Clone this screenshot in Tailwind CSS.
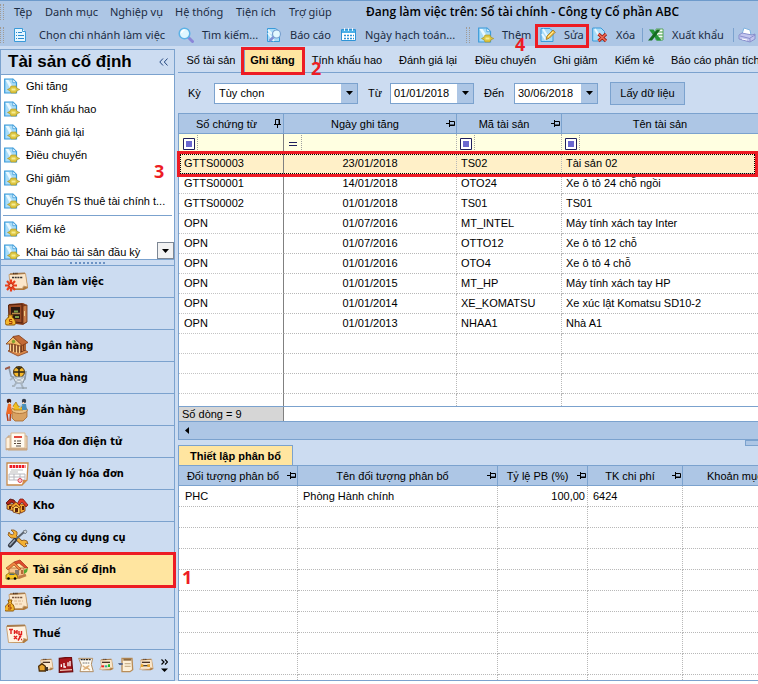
<!DOCTYPE html>
<html lang="vi">
<head>
    <meta charset="UTF-8">
    <meta name="viewport" content="width=device-width, initial-scale=1.0">
    <title>Tài sản cố định</title>
    <script src="https://cdn.jsdelivr.net/npm/@tailwindcss/browser@4"></script>
</head>
<body class="bg-white">
    <!-- Shared icons -->
    <svg class="absolute size-0">
        <symbol id="i-doc" viewBox="0 0 16 16">
            <path d="M.7 1h8.300l3.500 3.500V15H.7z" fill="#a9dcf8" stroke="#3a9ad9" stroke-width="1.200"/>
            <path d="M1.500 2h3l5 8H6z" fill="#e9f8ff"/>
            <path d="M8.800 1v3.700h3.700z" fill="#fff" stroke="#3a9ad9" stroke-width=".8"/>
            <path d="M3.500 11.500L6 10.300l1-2.300h5l1 2.300 2.800 1.200-2.800 1.300-1 2.200H7l-1-2.200z" fill="#dcc540" stroke="#a8901f" stroke-width=".6"/>
            <path d="M7.500 10.500h4v2h-4z" fill="#f7ec94"/>
        </symbol>
        <symbol id="i-pin" viewBox="0 0 9 7">
            <path d="M0 3.500h3M3.500 0v7M4 1.500h4.500v4H4" fill="none" stroke="#000"/>
            <path d="M4 5h4.500" stroke="#000"/>
        </symbol>
        <symbol id="i-pinv" viewBox="0 0 7 9">
            <path d="M1.500 5V.5h4V5M0 5.500h7M3.500 6v3" fill="none" stroke="#000"/>
            <path d="M5 .5V5" stroke="#000"/>
        </symbol>
        <symbol id="i-down" viewBox="0 0 7 4"><path d="M0 0h7L3.500 4z"/></symbol>
        <symbol id="i-op" viewBox="0 0 12 12">
            <path d="M.5.5h11v11H.5z" fill="#fff" stroke="#1f1f5c"/>
            <path d="M3 3h6v6H3z" fill="#6a68cf"/>
        </symbol>
        <symbol id="i-note" viewBox="0 0 24 24">
            <path d="M20.500 4l2.500 14-4 2H5l14-3z" fill="#b07a3e"/>
            <path d="M4 4.500l16.500-1 2 13.500-4-1-1 2.500H2.500L5 13z" fill="#fbe7cb" stroke="#c39560" stroke-width=".8"/>
            <path d="M5 4l15-.7" stroke="#a87d4e" stroke-width="1.600"/>
            <path d="M8 3.500h5" stroke="#4a3222" stroke-width="1.500" stroke-dasharray="1.500 .7"/>
        </symbol>
    </svg>

    <div class="relative flex min-h-screen flex-col overflow-hidden pb-[3px] font-['Liberation_Sans',Arial,sans-serif] text-[11px] leading-[14px] text-black">
        <!-- Menu -->
        <header class="border-t border-[#6d9acb] bg-[#adc6e5] font-['Noto_Sans','Open_Sans',sans-serif] text-[#1b2b42]">
            <nav class="flex h-6 items-center pb-0.5 whitespace-nowrap">
                <span class="mr-[10px] h-4 w-1 border-x border-dotted border-[#a09a94]"></span>
                <button class="w-[31px] text-left">Tệp</button>
                <button class="w-[65px] text-left">Danh mục</button>
                <button class="w-[65px] text-left">Nghiệp vụ</button>
                <button class="w-[61px] text-left">Hệ thống</button>
                <button class="w-[53px] text-left">Tiện ích</button>
                <button class="w-[77px] text-left">Trợ giúp</button>
                <span class="font-['Open_Sans',sans-serif] text-[12px] font-semibold text-black">Đang làm việc trên: Sổ tài chính - Công ty Cổ phần ABC</span>
            </nav>
            <div class="flex h-[21px] items-center pb-0.5 whitespace-nowrap">
                <span class="mr-2 h-4 w-1 shrink-0 border-x border-dotted border-[#a09a94]"></span>
                <button class="flex w-[166px] shrink-0 items-center gap-[11px]">
                    <svg class="size-4 shrink-0" viewBox="0 0 16 16"><path d="M2.500 1.500h8l3 3v10h-11z" fill="#e6f6ff" stroke="#3a9ad9"/><path d="M10.500 1.500v3h3" fill="#fff" stroke="#3a9ad9"/><path d="M4 5.500h1M6 5.500h4M4 8.500h1M6 8.500h6M4 11.500h1M6 11.500h6" stroke="#2a8bd0"/></svg>
                    Chọn chi nhánh làm việc
                </button>
                <button class="flex w-[88px] shrink-0 items-center gap-2">
                    <svg class="size-4 shrink-0" viewBox="0 0 16 16"><path d="M10.500 10.500l4 4" stroke="#8b86d8" stroke-width="3" stroke-linecap="round"/><circle cx="6.500" cy="6.500" r="5.300" fill="#dff6ff" stroke="#5db2e6" stroke-width="1.500"/><path d="M3.500 6a3.500 3.500 0 013-3" stroke="#fff" fill="none" stroke-width="1.500"/></svg>
                    Tìm kiếm...
                </button>
                <button class="flex w-[75px] shrink-0 items-center gap-2">
                    <svg class="size-4 shrink-0" viewBox="0 0 16 16"><path d="M1.500 1.500h8l4 3v10h-12z" fill="#a9dcf8" stroke="#3a9ad9"/><path d="M2 6l6 8M2 3l4 4" stroke="#e9f8ff" stroke-width="2"/><path d="M7.500 10l-4 4" stroke="#7f8fd6" stroke-width="2.500"/><circle cx="10.500" cy="7" r="4" fill="#e3f8ff" stroke="#7aa0cf" stroke-width="1.200"/></svg>
                    Báo cáo
                </button>
                <button class="flex w-[125px] shrink-0 items-center gap-2">
                    <svg class="size-4 shrink-0" viewBox="0 0 16 16"><path d="M.5 2.500h14v11H.5z" fill="#fff" stroke="#2e94d6"/><path d="M1 3h13v3H1z" fill="#4bb0e8"/><path d="M3.500 1v3M7.500 1v3M11.500 1v3" stroke="#e8f7ff"/><path d="M3 8.500h10M3 11.500h10" stroke="#2e94d6" stroke-width="1.500" stroke-dasharray="2 1"/></svg>
                    Ngày hạch toán...
                </button>
                <span class="mr-2 h-4 w-1 shrink-0 border-x border-dotted border-[#a09a94]"></span>
                <button class="flex w-[62px] shrink-0 items-center gap-2"><svg class="size-4 shrink-0"><use href="#i-doc"/></svg>Thêm</button>
                <button class="relative flex w-[52px] shrink-0 items-center gap-2">
                    <svg class="size-4 shrink-0" viewBox="0 0 16 16"><path d="M1 1.500h9l3 3v10H1z" fill="#a9dcf8" stroke="#3a9ad9"/><path d="M3 2l6 10M2 7l4 6" stroke="#e9f8ff" stroke-width="2"/><path d="M6 12.500l1-3.500 6-6 2.300 2.200-6 6z" fill="#f3c24a" stroke="#9b7420" stroke-width=".8"/><path d="M8 10l5-5" stroke="#fff0a0"/></svg>
                    Sửa
                    <span class="absolute -top-[3px] -left-[5px] h-6 w-[54px] border-3 border-[#ed1c24]"></span>
                </button>
                <button class="flex w-[50px] shrink-0 items-center gap-2">
                    <svg class="size-4 shrink-0" viewBox="0 0 16 16"><path d="M.7 1h8.300l3.500 3.500V14H.7z" fill="#a9dcf8" stroke="#3a9ad9"/><path d="M3 2l6 10" stroke="#e9f8ff" stroke-width="2"/><path d="M6.500 7l7.500 7M14 7l-7.500 7" stroke="#a01e12" stroke-width="3.200"/><path d="M6.500 7l7.500 7M14 7l-7.500 7" stroke="#ee6a55" stroke-width="1.700"/></svg>
                    Xóa
                </button>
                <span class="mr-[5px] h-[14px] w-px shrink-0 bg-[#7ba2ce]"></span>
                <button class="flex w-[85px] shrink-0 items-center gap-2">
                    <svg class="size-4 shrink-0" viewBox="0 0 16 16"><path d="M8 2h7v11H8z" fill="#fff" stroke="#3c9a3c" stroke-width=".8"/><path d="M10 5h5M10 8h5M10 11h5" stroke="#3c9a3c"/><path d="M1 2.500h4.500l8 11H9z" fill="#25963a"/><path d="M12.500 2.500H9l-9 11h4z" fill="#156b22"/></svg>
                    Xuất khẩu
                </button>
                <span class="mr-1 h-[14px] w-px shrink-0 bg-[#7ba2ce]"></span>
                <button class="shrink-0" aria-label="In">
                    <svg class="h-4 w-5" viewBox="0 0 20 16"><path d="M4 7l2-6 6 2 1 5z" fill="#fff" stroke="#7fb3e0"/><path d="M1 8l3-2 10 2 3-1v5l-5 3-11-3z" fill="#c3c5ee" stroke="#7c80c4" stroke-width=".8"/><path d="M2 9l10 2.500v3M12 11l5-3" stroke="#7c80c4" fill="none" stroke-width=".8"/><path d="M4 12l5 1" stroke="#fff"/></svg>
                </button>
            </div>
        </header>

        <div class="flex flex-1 gap-[3px] bg-[#ccdcf1]">
            <!-- Sidebar -->
            <aside class="relative mt-[3px] flex w-[175px] shrink-0 flex-col border border-[#7ba2ce]">
                <div class="flex h-[25px] items-center justify-between border-b border-[#7ba2ce] pr-1.5 pl-[7px]">
                    <h1 class="text-[17px] leading-6 font-bold">Tài sản cố định</h1>
                    <svg class="h-2 w-[9px]" viewBox="0 0 9 8"><path d="M4 .5L.8 4 4 7.500M8.500.5L5.300 4l3.200 3.500" fill="none" stroke="#24477f"/></svg>
                </div>
                <div class="relative h-[184px] overflow-hidden bg-white whitespace-nowrap">
                    <a href="#" class="flex h-[23px] items-center gap-1.5 pb-0.5 pl-[3px]"><svg class="size-4"><use href="#i-doc"/></svg>Ghi tăng</a>
                    <a href="#" class="flex h-[23px] items-center gap-1.5 pb-0.5 pl-[3px]"><svg class="size-4"><use href="#i-doc"/></svg>Tính khấu hao</a>
                    <a href="#" class="flex h-[23px] items-center gap-1.5 pb-0.5 pl-[3px]"><svg class="size-4"><use href="#i-doc"/></svg>Đánh giá lại</a>
                    <a href="#" class="flex h-[23px] items-center gap-1.5 pb-0.5 pl-[3px]"><svg class="size-4"><use href="#i-doc"/></svg>Điều chuyển</a>
                    <a href="#" class="flex h-[23px] items-center gap-1.5 pb-0.5 pl-[3px]"><svg class="size-4"><use href="#i-doc"/></svg>Ghi giảm</a>
                    <a href="#" class="flex h-[23px] items-center gap-1.5 pb-0.5 pl-[3px]"><svg class="size-4"><use href="#i-doc"/></svg>Chuyển TS thuê tài chính t...</a>
                    <hr class="mx-0.5 my-0.5 border-[#7ba2ce]">
                    <a href="#" class="flex h-[23px] items-center gap-1.5 pb-0.5 pl-[3px]"><svg class="size-4"><use href="#i-doc"/></svg>Kiểm kê</a>
                    <a href="#" class="flex h-[23px] items-center gap-1.5 pb-0.5 pl-[3px]"><svg class="size-4"><use href="#i-doc"/></svg>Khai báo tài sản đầu kỳ</a>
                    <button class="absolute right-0 bottom-0 flex h-[17px] w-[17px] items-center justify-center border border-[#7d8794] bg-[#f2f2f2]" aria-label="Cuộn xuống"><svg class="h-1 w-[7px]"><use href="#i-down"/></svg></button>
                </div>
                <div class="flex h-[6px] items-center justify-center border-t border-[#7ba2ce]">
                    <span class="w-[35px] border-t-2 border-dotted border-[#6d93c4]"></span>
                </div>
                <nav class="font-['DejaVu_Sans_Condensed','DejaVu_Sans',sans-serif] text-[11px] font-bold">
                    <a href="#" class="flex h-8 items-center gap-1 border-t border-[#7ba2ce] pl-1">
                        <svg class="size-6" viewBox="0 0 24 24"><use href="#i-note"/><path d="M7 7.500h11" stroke="#333" stroke-width="1.500" stroke-dasharray="2 .7"/><path d="M6 9.500v12M0 15.500h12M2 11l8 9M10 11l-8 9" stroke="#e8401c" stroke-width="2.200"/><circle cx="6" cy="15.500" r="2" fill="#ffd2b0" stroke="#c8280e"/></svg>
                        Bàn làm việc
                    </a>
                    <a href="#" class="flex h-8 items-center gap-1 border-t border-[#7ba2ce] pl-1">
                        <svg class="size-6" viewBox="0 0 24 24"><path d="M4 2l14-1 4 2v17l-4 3-14-2z" fill="#8a3f1c"/><path d="M3.500 3L17 2v19L4 19z" fill="#9c4d26" stroke="#54210c"/><path d="M6 5h9v12H6z" fill="#2c1a12"/><path d="M7 11.500h8" stroke="#b98a48" stroke-width="1.500"/><path d="M9 8.500h4v2H9zM10 14h4v2h-4z" fill="#7fa04a"/><path d="M18 4l4-1v17l-4 2z" fill="#c77c48" stroke="#6b2e10" stroke-width=".8"/><path d="M19.500 9v5" stroke="#f3cf8a"/><path d="M3 13h5l-1 2c3.500 2 5 8 2 8H2c-3 0-2.500-6 2-8z" fill="#f3b62c" stroke="#8d5608"/><path d="M7 17.500H4.500v2H7v2H4" stroke="#a23a0a" fill="none"/></svg>
                        Quỹ
                    </a>
                    <a href="#" class="flex h-8 items-center gap-1 border-t border-[#7ba2ce] pl-1">
                        <svg class="size-6" viewBox="0 0 24 24"><path d="M3 17l10 5 10-4-3-2-13-2z" fill="#d9884a" stroke="#8b4220" stroke-width=".8"/><path d="M4 10h11v9L4 17zM15 9l6-1v8l-6 3z" fill="#6a2f14"/><path d="M5.500 10v7M8.500 10v8M11.500 10v9M14.500 11v8" stroke="#ffd28c" stroke-width="1.500"/><path d="M17.500 10v7M20 9v7" stroke="#c9793f" stroke-width="1.500"/><path d="M1 10l7-7 9 8-2 1-7-2z" fill="#f2bd6a" stroke="#7d3817" stroke-width=".8"/><path d="M8 2.500l6-1 9 7-6 3z" fill="#c36c38" stroke="#7d3817" stroke-width=".8"/><circle cx="8.500" cy="7.500" r="1.700" fill="#7fa32e"/></svg>
                        Ngân hàng
                    </a>
                    <a href="#" class="flex h-8 items-center gap-1 border-t border-[#7ba2ce] pl-1">
                        <svg class="size-6" viewBox="0 0 24 24"><path d="M4 2l2 8 4 3M21 5l-1 8-4 3" fill="none" stroke="#8c99a8" stroke-width="1.600"/><path d="M0 3l5-2" stroke="#9d5a48" stroke-width="2"/><circle cx="14" cy="6" r="5.500" fill="#f5b82b" stroke="#4a3210"/><path d="M9 6h10M14 1v10M11 1l3 2 3-2" stroke="#2c2517" stroke-width="1.500" fill="none"/><path d="M8 11h12l-2 6h-7z" fill="#e3e8ec" stroke="#8a96a2"/><path d="M10 12l8 4M18 12l-8 4" stroke="#9eaab5" stroke-width=".8"/><path d="M12 16l-3 4H7M16 17l2 5h4M8 12l-3 2" stroke="#a8b4bf" stroke-width="2" fill="none"/><path d="M11 22h8" stroke="#8a96a2"/></svg>
                        Mua hàng
                    </a>
                    <a href="#" class="flex h-8 items-center gap-1 border-t border-[#7ba2ce] pl-1">
                        <svg class="size-6" viewBox="0 0 24 24"><path d="M7 12l15 0v7l-4 4h-8l-3-3z" fill="#d9a262" stroke="#a5672f" stroke-width=".8"/><ellipse cx="14.500" cy="12" rx="8" ry="3.500" fill="#edc285" stroke="#a5672f" stroke-width=".8"/><path d="M8 8l3-4 2 4 4 1 1 3H9z" fill="#f0c021" stroke="#a26c09" stroke-width=".7"/><path d="M3 6h3l1 10H1z" fill="#ef6a24"/><path d="M2 16l1 7M5.500 16L5 23" stroke="#b83d19" stroke-width="1.500"/><path d="M6 8l3 2" stroke="#f9cba1" stroke-width="1.500"/><circle cx="4" cy="3" r="2.300" fill="#3b1810"/><path d="M17 6h4l1 6h-5z" fill="#4a90bb"/><path d="M17 7l-3 3" stroke="#a9c6da" stroke-width="1.500"/><circle cx="19" cy="3" r="2.200" fill="#353b49"/><path d="M4.500 4v2M18.500 4v2" stroke="#f9cba1" stroke-width="1.500"/></svg>
                        Bán hàng
                    </a>
                    <a href="#" class="flex h-8 items-center gap-1 border-t border-[#7ba2ce] pl-1">
                        <svg class="size-6" viewBox="0 0 24 24"><path d="M3 6h19v14H3z" fill="#f3dcc0" stroke="#c49f78"/><path d="M6 3h14v15H6z" fill="#fffaf0" stroke="#d8b991"/><path d="M1 8l4-1v12l-4 1z" fill="#fff1dc" stroke="#c49f78" stroke-width=".7"/><path d="M1 19h21" stroke="#c9a078" stroke-width="1.500"/><path d="M9 7h8" stroke="#e03527" stroke-width="1.800"/><path d="M9 11h2M12 11h4M9 13.500h2M12 13.500h4M11 16h5" stroke="#59483c" stroke-width="1.200"/></svg>
                        Hóa đơn điện tử
                    </a>
                    <a href="#" class="flex h-8 items-center gap-1 border-t border-[#7ba2ce] pl-1">
                        <svg class="size-6" viewBox="0 0 24 24"><path d="M2 1h21l-1 17-5 5H2z" fill="#fff" stroke="#c88a4b" stroke-width="1.300"/><path d="M4.500 4.500h16" stroke="#ed1c24" stroke-width="2.800" stroke-dasharray="2.500 .6"/><path d="M6 8h12M5 10h8" stroke="#bbb"/><path d="M4 12h16v6H4zM4 15h16M9 12v6M15 12v6" fill="none" stroke="#b7b7bd"/><circle cx="15" cy="18.500" r="2" fill="#f7c9cf" stroke="#dc4658"/><path d="M17 23l1-5h4.500z" fill="#d38b49"/></svg>
                        Quản lý hóa đơn
                    </a>
                    <a href="#" class="flex h-8 items-center gap-1 border-t border-[#7ba2ce] pl-1">
                        <svg class="size-6" viewBox="0 0 24 24"><path d="M2 10h7v7l-7-2z" fill="#f2ae3c" stroke="#6f2a0c" stroke-width=".8"/><path d="M1 9l4-4 4 1 3 4-2 1-3-3-4 3z" fill="#b0251a" stroke="#4d0d05" stroke-width=".8"/><path d="M14 10h6v7l-4 2-2-3z" fill="#f6a830" stroke="#6f2a0c" stroke-width=".8"/><path d="M12 10l3-5h3l5 6-2 2-4-5-3 3z" fill="#e13a28" stroke="#701207" stroke-width=".7"/><path d="M8 12h7v8l-7-2z" fill="#ffd35f" stroke="#6f2a0c" stroke-width=".8"/><path d="M6 12l5-4 5 5-2 1-3-3-3 3z" fill="#f0a12a" stroke="#7a370b" stroke-width=".7"/><path d="M4 12h2v3H4zM10 14h3v4h-3zM17 12h2v4h-2z" fill="#5d2008"/></svg>
                        Kho
                    </a>
                    <a href="#" class="flex h-8 items-center gap-1 border-t border-[#7ba2ce] pl-1">
                        <svg class="size-6" viewBox="0 0 24 24"><path d="M8 9l10 9" stroke="#865016" stroke-width="4.200"/><path d="M6 4l3 3-1 2-3-1-1-2-1 3 3 3h3l3-3v-3L9 4zM16 18l3 3 3-1-2-2 1-1 2 1-1-3-3-1-3 1z" fill="#f3b033" stroke="#865016" stroke-width=".8"/><path d="M8 9l10 9" stroke="#f3b033" stroke-width="2.500"/><path d="M19 6l-9 8" stroke="#5a6470" stroke-width="2"/><path d="M18 5l3-1 1 2-2 2z" fill="#cfd6dc" stroke="#5a6470" stroke-width=".7"/><path d="M10 14l-5 5.500" stroke="#343944" stroke-width="4.200" stroke-linecap="round"/><path d="M10 13.500l-5.500 6" stroke="#9ba7b5" stroke-width="1.500"/></svg>
                        Công cụ dụng cụ
                    </a>
                    <a href="#" class="relative flex h-8 items-center gap-1 border-t border-[#7ba2ce] bg-[#ffe5a0] pl-1">
                        <svg class="size-6" viewBox="0 0 24 24"><path d="M4 10h15v8H4z" fill="#f6c28b" stroke="#b06a35" stroke-width=".8"/><path d="M9 4l6-2 8 8-3 0-6-5-4 2z" fill="#e04a2e" stroke="#a0301a" stroke-width=".7"/><path d="M1 10l8-6 7 7-2 1-5-5-6 5z" fill="#f0833f" stroke="#a84a1c" stroke-width=".7"/><path d="M10 12h4v5h-4z" fill="#8c7a6c"/><path d="M19 12l4-2-1 4-3 2z" fill="#58a832"/><path d="M16 12h2v4h-2z" fill="#b56a38"/><path d="M1 17l3-2h5l3 2 1 3-2 1H1z" fill="#f8c623" stroke="#80560a" stroke-width=".7"/><path d="M4 17l1-1.500h3.500L10 17z" fill="#496375"/><circle cx="3.500" cy="20.500" r="1.300"/><circle cx="10" cy="20.500" r="1.300"/><path d="M13 20l8-3" stroke="#c07a45" stroke-width="2.500"/></svg>
                        Tài sản cố định
                        <span class="absolute -inset-x-0.5 -top-[2px] -bottom-[3px] border-3 border-[#ed1c24]"></span>
                    </a>
                    <a href="#" class="flex h-8 items-center gap-1 border-t border-[#7ba2ce] pl-1">
                        <svg class="size-6" viewBox="0 0 24 24"><use href="#i-note"/><path d="M7 7.500h11" stroke="#775540" stroke-width="1.300" stroke-dasharray="2 .7"/><path d="M9 11h9M10 14h8" stroke="#d9b48f" stroke-dasharray="3 1"/><path d="M3 10h4l-1 3c4 2 4 8 2 8H1c-3 0-1-6 3-8z" fill="#f3b62c" stroke="#8d5608"/><path d="M6 15H3.500v2H6v2H3" stroke="#a23a0a" fill="none"/></svg>
                        Tiền lương
                    </a>
                    <a href="#" class="flex h-8 items-center gap-1 border-t border-[#7ba2ce] pl-1">
                        <svg class="size-6" viewBox="0 0 24 24"><path d="M20.500 4l2.500 14-4 3H5l14-3z" fill="#b07a3e"/><path d="M1.500 4.500l19-1 2 14-4-1-1 4H3.500z" fill="#fff3e2" stroke="#c39560" stroke-width=".8"/><path d="M2 4l18-.7" stroke="#a87d4e" stroke-width="1.800"/><path d="M4 7.500h4M6 8v4M9.500 8v4M12 8v4M9.500 10H12M14 9v3.500h2.500V9" stroke="#e01f1f" stroke-width="1.400" fill="none"/><path d="M9 14l3 3M12 14l-3 3M16 13.500l-3 5M14 14.500h.5M16 17.500h1" stroke="#e01f1f" stroke-width="1.500"/></svg>
                        Thuế
                    </a>
                </nav>
                <div class="flex h-[31px] items-center gap-1 border-t border-[#7ba2ce] pl-[37px]">
                    <button aria-label="Giá thành"><svg class="size-4" viewBox="0 0 24 24"><use href="#i-note"/><path d="M7 8h11" stroke="#4a3222" stroke-width="2"/><path d="M1 14l5-4 5 4v7H2z" fill="#e8a52d" stroke="#513008" stroke-width="2"/><path d="M11 15h4v6h-4" fill="#3d352c"/></svg></button>
                    <button aria-label="Sổ cái"><svg class="size-4" viewBox="0 0 24 24"><path d="M2 2l18-2 2 22-20 1z" fill="#a8161b" stroke="#6f0e10" stroke-width="2"/><path d="M5 11v4M9 9v6h3M15 8v6M18 6v8" stroke="#fff" stroke-width="2" fill="none"/><path d="M3 20l18-1" stroke="#e9c7b5" stroke-width="2"/></svg></button>
                    <button aria-label="Hợp đồng"><svg class="size-4" viewBox="0 0 24 24"><path d="M1 2h21l-2 9 3 11H3l2-10z" fill="#fffaf0" stroke="#b08d63" stroke-width="1.500"/><path d="M4 4h15" stroke="#222" stroke-width="2" stroke-dasharray="3 1"/><path d="M7 9h10" stroke="#777" stroke-width="1.500" stroke-dasharray="3 1"/><path d="M7 13l4 3 6-3M8 19l6-3 4 4" stroke="#dfb17b" stroke-width="2" fill="none"/></svg></button>
                    <button aria-label="Ngân sách"><svg class="size-4" viewBox="0 0 24 24"><use href="#i-note"/><path d="M6 8h12" stroke="#4a3222" stroke-width="2"/><path d="M5 14h4" stroke="#e22" stroke-width="3"/><path d="M10 14h4" stroke="#3a9" stroke-width="3"/><path d="M15 13h3" stroke="#2b2" stroke-width="4"/></svg></button>
                    <button aria-label="Thủ kho"><svg class="size-4" viewBox="0 0 24 24"><path d="M6 2h15l1 17-4 3H6z" fill="#fdf0d8" stroke="#b98d58" stroke-width="2"/><path d="M8 4h12" stroke="#8f6b42" stroke-width="3"/><path d="M10 10h9M10 14h9" stroke="#cbb390" stroke-width="2"/><path d="M0 9h7v3H2z" fill="#5c6b8c"/></svg></button>
                    <button aria-label="Tổng hợp"><svg class="size-4" viewBox="0 0 24 24"><use href="#i-note"/><path d="M6 8h12" stroke="#4a3222" stroke-width="2"/><path d="M6 13h11" stroke="#4d443a" stroke-width="2"/><path d="M4 11v4h4v-4zM14 11v4h4v-4z" fill="#e8a52d"/></svg></button>
                    <button class="ml-[3px]" aria-label="Thêm mục"><svg class="h-[13px] w-[7px]" viewBox="0 0 7 13"><path d="M.5.5l2.500 2.500L.5 5.500M4 .5L6.500 3 4 5.500" fill="none" stroke="#000" stroke-width="1.200"/><path d="M0 9.500h7L3.500 13z"/></svg></button>
                </div>
                <!-- Step 1 and 3 marks -->
                <span class="absolute top-[111px] left-[153px] font-['Open_Sans',sans-serif] text-[18px] leading-5 font-bold text-[#ed1c24]">3</span>
                <span class="absolute top-[517px] left-[181px] z-10 font-['Open_Sans',sans-serif] text-[18px] leading-5 font-bold text-[#ed1c24]">1</span>
            </aside>

            <!-- Main content -->
            <main class="flex min-w-0 flex-1 flex-col">
                <div class="relative flex h-[27px] items-end border-b border-[#7ba2ce] whitespace-nowrap">
                    <button class="h-6 w-[66px] shrink-0 text-center">Sổ tài sản</button>
                    <button class="relative h-6 w-[60px] shrink-0 border-l border-[#7ba2ce] bg-[#ffe5a0] pr-1 text-center font-bold">Ghi tăng
                        <span class="absolute -top-[1px] -left-[4px] h-[28px] w-16 border-3 border-[#ed1c24]"></span>
                    </button>
                    <button class="h-6 w-[86px] shrink-0 text-center">Tính khấu hao</button>
                    <button class="h-6 w-[76px] shrink-0 text-center">Đánh giá lại</button>
                    <button class="h-6 w-[79px] shrink-0 text-center">Điều chuyển</button>
                    <button class="h-6 w-[61px] shrink-0 text-center">Ghi giảm</button>
                    <button class="h-6 w-[57px] shrink-0 text-center">Kiểm kê</button>
                    <button class="h-6 shrink-0 px-2 text-center">Báo cáo phân tích</button>
                    <span class="absolute top-[12px] left-[133px] font-['Open_Sans',sans-serif] text-[18px] leading-5 font-bold text-[#ed1c24]">2</span>
                </div>

                <div class="flex h-10 items-center pl-[10px] whitespace-nowrap">
                    <label for="period" class="w-[26px]">Kỳ</label>
                    <div class="relative mr-[10px]">
                        <select id="period" class="block h-[21px] w-[144px] appearance-none border border-[#7ba2ce] bg-white pl-1">
                            <option>Tùy chọn</option>
                        </select>
                        <span class="pointer-events-none absolute inset-y-px right-px flex w-4 items-center justify-center bg-[#adc6e5]"><svg class="h-1 w-[7px]"><use href="#i-down"/></svg></span>
                    </div>
                    <label for="from" class="w-[22px]">Từ</label>
                    <div class="mr-[10px] flex h-[21px] w-[84px] border border-[#7ba2ce] bg-white">
                        <input id="from" class="w-0 flex-1 pl-[3px]" value="01/01/2018">
                        <button class="flex w-4 items-center justify-center bg-[#adc6e5]" aria-label="Chọn ngày"><svg class="h-1 w-[7px]"><use href="#i-down"/></svg></button>
                    </div>
                    <label for="to" class="w-[30px]">Đến</label>
                    <div class="mr-3 flex h-[21px] w-[84px] border border-[#7ba2ce] bg-white">
                        <input id="to" class="w-0 flex-1 pl-[3px]" value="30/06/2018">
                        <button class="flex w-4 items-center justify-center bg-[#adc6e5]" aria-label="Chọn ngày"><svg class="h-1 w-[7px]"><use href="#i-down"/></svg></button>
                    </div>
                    <button class="h-[23px] w-[75px] border border-[#7ba2ce] bg-[#adc6e5]">Lấy dữ liệu</button>
                </div>

                <!-- Assets -->
                <section class="relative border-y border-l border-[#7ba2ce] bg-white">
                    <div class="h-[292px] overflow-hidden">
                        <table class="w-full table-fixed border-separate border-spacing-0">
                            <colgroup><col class="w-[105px]"><col class="w-[173px]"><col class="w-[105px]"><col></colgroup>
                            <thead class="bg-[#adc6e5]">
                                <tr class="h-5">
                                    <th class="border-r border-b border-[#7ba2ce] p-0 font-normal"><div class="flex items-center pr-0.5"><span class="flex-1">Số chứng từ</span><svg class="h-[9px] w-[7px]"><use href="#i-pinv"/></svg></div></th>
                                    <th class="border-r border-b border-[#7ba2ce] p-0 font-normal"><div class="flex items-center pr-px"><span class="flex-1">Ngày ghi tăng</span><svg class="h-[7px] w-[9px]"><use href="#i-pin"/></svg></div></th>
                                    <th class="border-r border-b border-[#7ba2ce] p-0 font-normal"><div class="flex items-center pr-px"><span class="flex-1">Mã tài sản</span><svg class="h-[7px] w-[9px]"><use href="#i-pin"/></svg></div></th>
                                    <th class="border-b border-[#7ba2ce] p-0 font-normal">Tên tài sản</th>
                                </tr>
                            </thead>
                            <tbody id="assets">
                                <tr class="h-5 bg-[#ffffe1]">
                                    <td class="border-r border-[#808080] p-0"><span class="flex h-[19px] w-[19px] items-center border-r border-dotted border-[#a0a0a0] pl-1"><svg class="size-3"><use href="#i-op"/></svg></span></td>
                                    <td class="border-r border-dotted border-[#b0b0b0] p-0"><span class="flex h-[19px] w-[18px] items-center justify-center border-r border-dotted border-[#a0a0a0]"><svg class="h-1 w-2" viewBox="0 0 8 4"><path d="M0 .5h8M0 3.500h8" stroke="#1f1f5c"/></svg></span></td>
                                    <td class="border-r border-dotted border-[#b0b0b0] p-0"><span class="flex h-[19px] w-[18px] items-center border-r border-dotted border-[#a0a0a0] pl-[3px]"><svg class="size-3"><use href="#i-op"/></svg></span></td>
                                    <td class="p-0"><span class="flex h-[19px] w-[18px] items-center border-r border-dotted border-[#a0a0a0] pl-[3px]"><svg class="size-3"><use href="#i-op"/></svg></span></td>
                                </tr>
                            </tbody>
                        </table>
                    </div>
                    <div class="flex h-4 border-y border-[#7ba2ce]"><span class="w-[105px] border-r border-[#808080] bg-[#d6d6d6] pl-[3px]">Số dòng = 9</span></div>
                    <div class="flex h-[17px] items-center bg-[#adc6e5] pl-1.5"><svg class="h-[7px] w-1" viewBox="0 0 4 7"><path d="M4 0v7L0 3.500z"/></svg></div>
                    <!-- Focus line and frame round the selected row -->
                    <span class="absolute top-[37px] right-0 -left-[2px] h-[26px] border-3 border-[#ed1c24]"><span class="block h-full border border-dotted border-black"></span></span>
                </section>

                <!-- Allocation -->
                <div class="relative flex h-[25px] items-end">
                    <button class="h-5 w-[115px] border border-b-0 border-[#7ba2ce] bg-[#ffe5a0] font-bold">Thiết lập phân bổ</button>
                    <span class="absolute top-0 right-0 h-[6px] w-[13px] border border-r-0 border-[#7ba2ce] bg-[#adc6e5]"></span>
                </div>
                <section class="min-h-[200px] grow basis-[200px] overflow-hidden border-y border-l border-[#7ba2ce] bg-white">
                    <table class="w-full table-fixed border-separate border-spacing-0">
                        <colgroup><col class="w-[119px]"><col class="w-[200px]"><col class="w-[90px]"><col class="w-[95px]"><col></colgroup>
                        <thead class="bg-[#adc6e5] whitespace-nowrap">
                            <tr class="h-5">
                                <th class="border-r border-b border-[#7ba2ce] p-0 font-normal"><div class="flex items-center pr-px"><span class="flex-1">Đối tượng phân bổ</span><svg class="h-[7px] w-[9px]"><use href="#i-pin"/></svg></div></th>
                                <th class="border-r border-b border-[#7ba2ce] p-0 font-normal"><div class="flex items-center pr-px"><span class="flex-1">Tên đối tượng phân bổ</span><svg class="h-[7px] w-[9px]"><use href="#i-pin"/></svg></div></th>
                                <th class="border-r border-b border-[#7ba2ce] p-0 font-normal"><div class="flex items-center pr-px"><span class="flex-1">Tỷ lệ PB (%)</span><svg class="h-[7px] w-[9px]"><use href="#i-pin"/></svg></div></th>
                                <th class="border-r border-b border-[#7ba2ce] p-0 font-normal"><div class="flex items-center pr-px"><span class="flex-1">TK chi phí</span><svg class="h-[7px] w-[9px]"><use href="#i-pin"/></svg></div></th>
                                <th class="overflow-hidden border-b border-[#7ba2ce] p-0 pl-6 text-left font-normal">Khoản mục</th>
                            </tr>
                        </thead>
                        <tbody id="allocations"></tbody>
                    </table>
                </section>
            </main>
        </div>
        <span class="absolute top-[34px] left-[515px] font-['Open_Sans',sans-serif] text-[18px] leading-5 font-bold text-[#ed1c24]">4</span>
    </div>

    <script>
        const assets = [
            ['GTTS00003', '23/01/2018', 'TS02', 'Tài sản 02'],
            ['GTTS00001', '14/01/2018', 'OTO24', 'Xe ô tô 24 chỗ ngồi'],
            ['GTTS00002', '01/01/2018', 'TS01', 'TS01'],
            ['OPN', '01/07/2016', 'MT_INTEL', 'Máy tính xách tay Inter'],
            ['OPN', '01/07/2016', 'OTTO12', 'Xe ô tô 12 chỗ'],
            ['OPN', '01/01/2016', 'OTO4', 'Xe ô tô 4 chỗ'],
            ['OPN', '01/01/2015', 'MT_HP', 'Máy tính xách tay HP'],
            ['OPN', '01/01/2014', 'XE_KOMATSU', 'Xe xúc lật Komatsu SD10-2'],
            ['OPN', '01/01/2013', 'NHAA1', 'Nhà A1'],
        ];
        // empty lines fill up the rest of the grid
        while (assets.length < 13) assets.push(['', '', '', '']);

        const assetBody = document.getElementById('assets');
        assets.forEach((row, i) => {
            const tr = document.createElement('tr');
            tr.className = i === 0 ? 'h-5 bg-[#fff0c8]' : 'h-5';
            tr.innerHTML = `
                <td class="border-r border-b border-[#808080] border-b-[#c4c4c4] [border-bottom-style:dotted] p-0 pb-px pl-[5px]">${row[0]}</td>
                <td class="border-r border-b border-dotted border-[#b8b8b8] p-0 pb-px text-center">${row[1]}</td>
                <td class="border-r border-b border-dotted border-[#b8b8b8] p-0 pb-px pl-1">${row[2]}</td>
                <td class="border-b border-dotted border-[#b8b8b8] p-0 pb-px pl-1">${row[3]}</td>
            `;
            assetBody.appendChild(tr);
        });

        const allocations = [['PHC', 'Phòng Hành chính', '100,00', '6424', '']];
        while (allocations.length < 10) allocations.push(['', '', '', '', '']);

        const allocationBody = document.getElementById('allocations');
        allocations.forEach(row => {
            const tr = document.createElement('tr');
            tr.className = 'h-[21px]';
            tr.innerHTML = `
                <td class="border-r border-b border-dotted border-[#b8b8b8] p-0 pb-px pl-1.5">${row[0]}</td>
                <td class="border-r border-b border-dotted border-[#b8b8b8] p-0 pb-px pl-[5px]">${row[1]}</td>
                <td class="border-r border-b border-dotted border-[#b8b8b8] p-0 pr-0.5 pb-px text-right">${row[2]}</td>
                <td class="border-r border-b border-dotted border-[#b8b8b8] p-0 pb-px pl-[5px]">${row[3]}</td>
                <td class="border-b border-dotted border-[#b8b8b8] p-0 pb-px">${row[4]}</td>
            `;
            allocationBody.appendChild(tr);
        });
    </script>
</body>
</html>
